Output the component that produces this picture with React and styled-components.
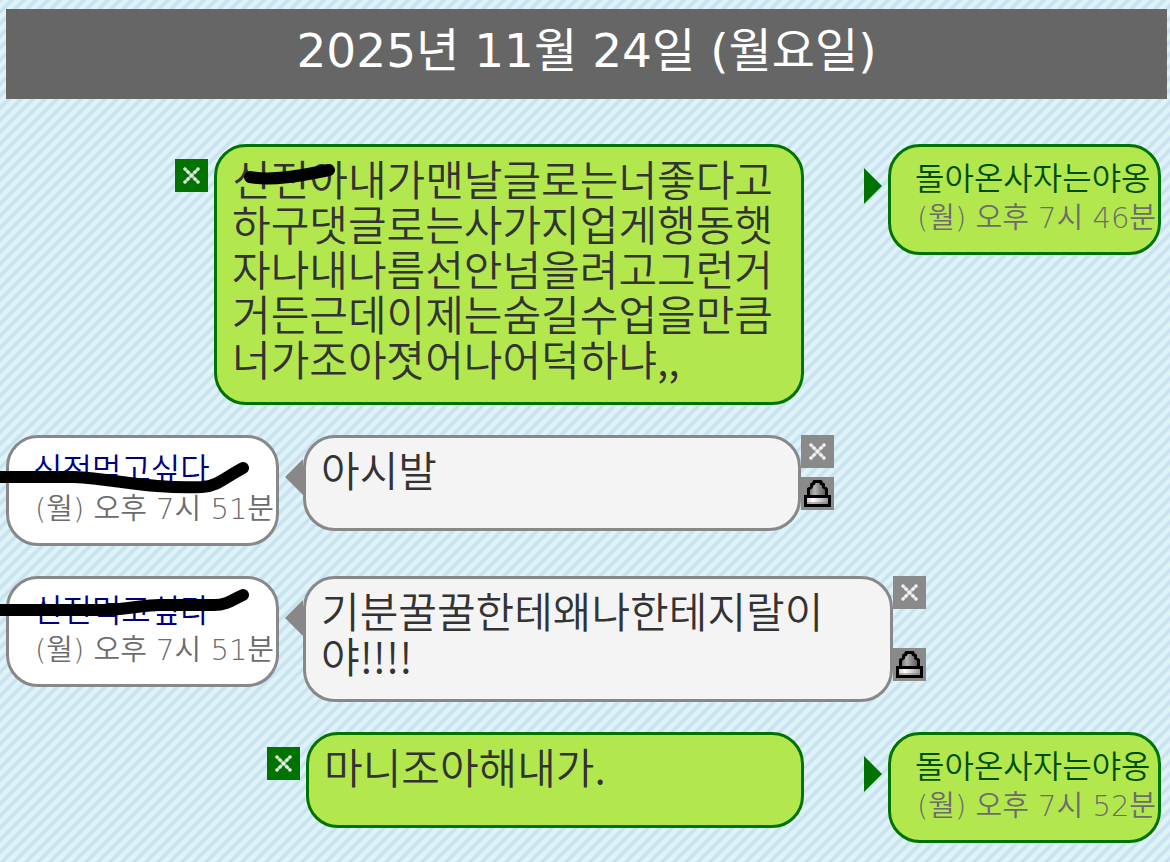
import styled, { createGlobalStyle } from "styled-components";

const GlobalStyle = createGlobalStyle`
  * {
    box-sizing: border-box;
  }

  body {
    margin: 0;
    min-height: 100vh;
    background-color: #e0f4f8;
    background-image: linear-gradient(
      135deg,
      #c4def0 0%,
      #e0f4f8 18%,
      #e0f4f8 32%,
      #c4def0 50%,
      #e0f4f8 68%,
      #e0f4f8 82%,
      #c4def0 100%
    );
    background-size: 12px 12px;
    font-family: "DejaVu Sans", "Noto Sans CJK KR", sans-serif;
    overflow-x: hidden;
  }
`;

const Page = styled.main`
  padding: 9px 3px 18px 6px;
`;

const DateBar = styled.h1`
  margin: 0 0 45px;
  padding-bottom: 6px;
  background: #666;
  color: #fff;
  font-size: 47px;
  font-weight: 400;
  line-height: 84px;
  text-align: center;
`;

const List = styled.div`
  display: flex;
  flex-direction: column;
  gap: 30px;
`;

const Row = styled.article`
  display: flex;
  align-items: flex-start;
  justify-content: ${({ $mine }) => ($mine ? "flex-end" : "flex-start")};
  padding-right: 6px;
`;

const Content = styled.div`
  display: flex;
`;

const Bubble = styled.div`
  position: relative;
  min-width: 498px;
  max-width: 590px;
  min-height: 96px;
  padding: 8px 15px 22px;
  border: 3px solid ${({ $mine }) => ($mine ? "#007300" : "#888")};
  border-radius: 32px;
  background: ${({ $mine }) => ($mine ? "#b2e84e" : "#f4f4f4")};
`;

const Text = styled.p`
  margin: 0;
  color: #333;
  font-family: "Noto Sans CJK KR", sans-serif;
  font-size: 42px;
  font-weight: 350;
  line-height: 45px;
`;

const Profile = styled.div`
  position: relative;
  flex: none;
  width: 273px;
  padding: 9px 0 12px 24px;
  border: 3px solid ${({ $mine }) => ($mine ? "#007300" : "#888")};
  border-radius: 32px;
  background: ${({ $mine }) => ($mine ? "#b2e84e" : "#fff")};
  white-space: nowrap;
`;

const Name = styled.a`
  display: block;
  color: ${({ $mine }) => ($mine ? "#004d00" : "#000080")};
  font-family: "Noto Sans CJK KR", sans-serif;
  font-size: 32px;
  font-weight: 350;
  line-height: 40px;
  text-decoration: none;
`;

const Time = styled.time`
  display: block;
  padding-left: 2px;
  color: #6c6c6c;
  font-size: 29px;
  font-weight: 350;
  line-height: 44px;
`;

const Arrow = styled.span`
  flex: none;
  width: 18px;
  height: 36px;
  margin: ${({ $mine }) => ($mine ? "24px 6px 0 60px" : "24px 0 0 6px")};
  background: ${({ $mine }) => ($mine ? "#007300" : "#888")};
  clip-path: ${({ $mine }) =>
    $mine ? "polygon(0 0, 100% 50%, 0 100%)" : "polygon(100% 0, 100% 100%, 0 50%)"};
`;

const Tools = styled.div`
  display: flex;
  flex: none;
  flex-direction: column;
  justify-content: space-between;
  padding: ${({ $mine }) => ($mine ? "15px 6px 0 0" : "0 0 21px")};
`;

const ToolButton = styled.button`
  display: block;
  width: 33px;
  height: 33px;
  padding: 0;
  border: 0;
  background: ${({ $mine }) => ($mine ? "#007300" : "#8a8a8a")};
  cursor: pointer;

  svg {
    display: block;
  }
`;

const Scribble = styled.svg`
  position: absolute;
  left: -9px;
  top: -3px;
  overflow: visible;
  pointer-events: none;
  fill: none;
  stroke: #000;
  stroke-width: 12;
  stroke-linecap: round;
  stroke-linejoin: round;
`;

const cross = [[10, 10], [13, 13], [16.5, 16.5], [20, 20], [23, 23], [23, 10], [20, 13], [13, 20], [10, 23]];

function CloseIcon() {
  return (
    <svg width="33" height="33" viewBox="0 0 33 33" aria-hidden="true">
      <path d="M10 10l13 13M23 10L10 23" stroke="#fff" strokeOpacity="0.6" strokeWidth="3" strokeLinecap="round" />
      {cross.map(([x, y]) => (
        <circle key={`${x}-${y}`} cx={x} cy={y} r="1.8" fill="#fff" fillOpacity="0.75" />
      ))}
    </svg>
  );
}

function LockIcon() {
  return (
    <svg width="33" height="33" viewBox="0 0 33 33" aria-hidden="true">
      <defs>
        <linearGradient id="dome">
          <stop offset="0" stopColor="#666" />
          <stop offset="0.35" stopColor="#b5b5b5" />
          <stop offset="0.6" stopColor="#8a8a8a" />
          <stop offset="1" stopColor="#555" />
        </linearGradient>
        <linearGradient id="base">
          <stop offset="0" stopColor="#bbb" />
          <stop offset="0.3" stopColor="#fff" />
          <stop offset="1" stopColor="#8c8c8c" />
        </linearGradient>
      </defs>
      <path d="M7.5 19.5V12L10.5 10V7.5L13 6.5V4.5H20V6.5L22.5 7.5V10L25.5 12V19.5Z" fill="url(#dome)" stroke="#000" strokeWidth="3" strokeLinejoin="round" />
      <rect x="4.5" y="19.5" width="24" height="9" fill="url(#base)" stroke="#000" strokeWidth="3" />
      <path d="M6 26H27" stroke="#777" strokeOpacity="0.5" strokeWidth="2" />
    </svg>
  );
}

const messages = [
  {
    id: 1,
    mine: true,
    name: "돌아온사자는야옹",
    time: "(월) 오후 7시 46분",
    text: "신전아내가맨날글로는너좋다고하구댓글로는사가지업게행동햇자나내나름선안넘을려고그런거거든근데이제는숨길수업을만큼너가조아졋어나어덕하냐,,",
    textMark: "M42 33C64 37 92 32 121 26",
  },
  {
    id: 2,
    name: "신전먹고싶다",
    time: "(월) 오후 7시 51분",
    text: "아시발",
    nameMark: "M-12 42H74C116 44 148 54 202 52C218 51 224 43 243 33",
  },
  {
    id: 3,
    name: "신전먹고싶다",
    time: "(월) 오후 7시 51분",
    text: "기분꿀꿀한테왜나한테지랄이야!!!!",
    nameMark: "M-12 34H104C132 33 148 28 162 29H214C228 29 233 23 243 19",
  },
  {
    id: 4,
    mine: true,
    name: "돌아온사자는야옹",
    time: "(월) 오후 7시 52분",
    text: "마니조아해내가.",
  },
];

function Author({ item }) {
  return (
    <Profile $mine={item.mine}>
      <Name href="#" $mine={item.mine}>{item.name}</Name>
      <Time>{item.time}</Time>
      {item.nameMark && (
        <Scribble width="273" height="111">
          <path d={item.nameMark} />
        </Scribble>
      )}
    </Profile>
  );
}

function Message({ item }) {
  const bubble = (
    <Bubble $mine={item.mine}>
      <Text>{item.text}</Text>
      {item.textMark && (
        <Scribble width="200" height="60">
          <path d={item.textMark} />
        </Scribble>
      )}
    </Bubble>
  );

  const tools = (
    <Tools $mine={item.mine}>
      <ToolButton $mine={item.mine} aria-label="삭제">
        <CloseIcon />
      </ToolButton>
      {!item.mine && (
        <ToolButton aria-label="비밀글">
          <LockIcon />
        </ToolButton>
      )}
    </Tools>
  );

  if (item.mine) {
    return (
      <Row $mine>
        <Content>
          {tools}
          {bubble}
        </Content>
        <Arrow $mine />
        <Author item={item} />
      </Row>
    );
  }

  return (
    <Row>
      <Author item={item} />
      <Arrow />
      <Content>
        {bubble}
        {tools}
      </Content>
    </Row>
  );
}

function App() {
  return (
    <>
      <GlobalStyle />
      <Page>
        <DateBar>2025년 11월 24일 (월요일)</DateBar>
        <List>
          {messages.map((item) => (
            <Message key={item.id} item={item} />
          ))}
        </List>
      </Page>
    </>
  );
}

export default App;
